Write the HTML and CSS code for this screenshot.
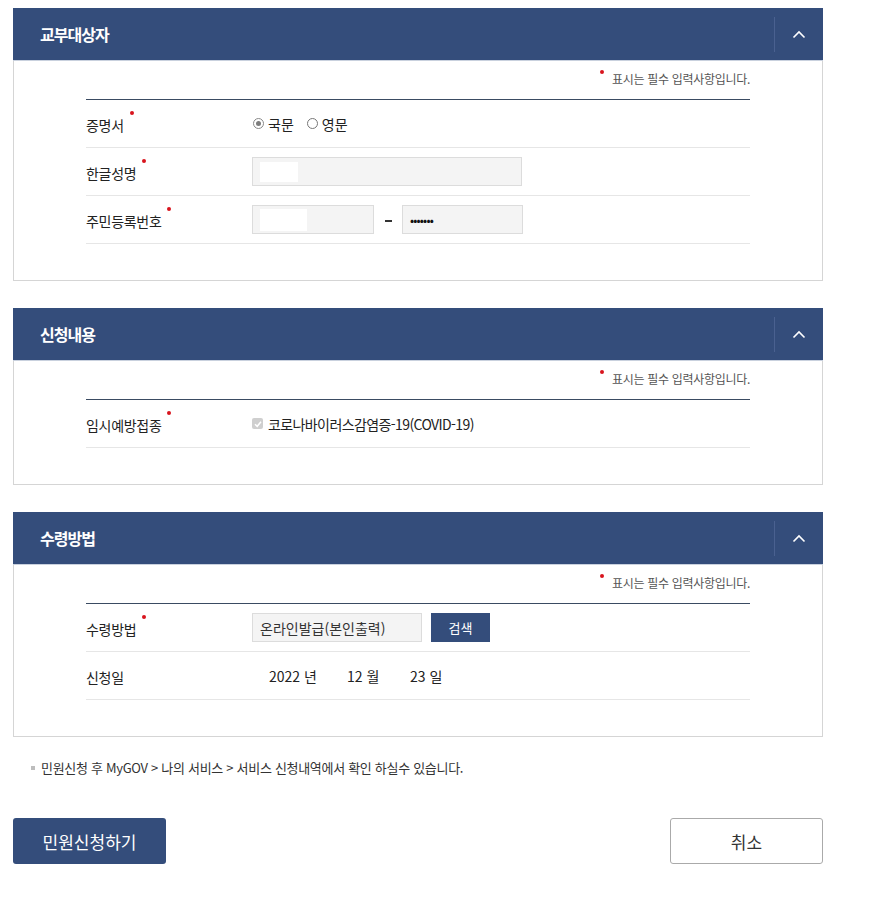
FILE: index.html
```html
<!DOCTYPE html>
<html lang="ko">
<head>
<meta charset="utf-8">
<title>민원신청</title>
<link rel="stylesheet" href="styles.css">
</head>
<body>
<div class="wrap">
  <section class="panel">
    <div class="panel-head">
      <h2 class="panel-title">교부대상자</h2>
      <button class="toggle" type="button" aria-label="접기"><svg width="14" height="9" viewBox="0 0 14 9"><path d="M1.5 7.5 L7 2 L12.5 7.5" fill="none" stroke="#fff" stroke-width="1.6"/></svg></button>
    </div>
    <div class="panel-body">
      <p class="req-note"><span class="dot"></span>표시는 필수 입력사항입니다.</p>
      <div class="form">
        <div class="row">
          <div class="label">증명서<span class="req"></span></div>
          <div class="field">
            <label class="radio"><span class="rb on"></span>국문</label>
            <label class="radio"><span class="rb"></span>영문</label>
          </div>
        </div>
        <div class="row">
          <div class="label">한글성명<span class="req"></span></div>
          <div class="field">
            <div class="input w270"><span class="mask m38"></span></div>
          </div>
        </div>
        <div class="row">
          <div class="label">주민등록번호<span class="req"></span></div>
          <div class="field">
            <div class="input w122"><span class="mask m47"></span></div>
            <span class="dash"><span class="bar"></span></span>
            <div class="input w121"><span class="pw">•••••••</span></div>
          </div>
        </div>
      </div>
    </div>
  </section>

  <section class="panel">
    <div class="panel-head">
      <h2 class="panel-title">신청내용</h2>
      <button class="toggle" type="button" aria-label="접기"><svg width="14" height="9" viewBox="0 0 14 9"><path d="M1.5 7.5 L7 2 L12.5 7.5" fill="none" stroke="#fff" stroke-width="1.6"/></svg></button>
    </div>
    <div class="panel-body">
      <p class="req-note"><span class="dot"></span>표시는 필수 입력사항입니다.</p>
      <div class="form">
        <div class="row">
          <div class="label">임시예방접종<span class="req"></span></div>
          <div class="field">
            <label class="check"><span class="cb"><svg width="10" height="10" viewBox="0 0 10 10"><path d="M2 5.2 L4.2 7.3 L8 2.8" fill="none" stroke="#fff" stroke-width="1.5"/></svg></span>코로나바이러스감염증-19(COVID-19)</label>
          </div>
        </div>
      </div>
    </div>
  </section>

  <section class="panel last">
    <div class="panel-head">
      <h2 class="panel-title">수령방법</h2>
      <button class="toggle" type="button" aria-label="접기"><svg width="14" height="9" viewBox="0 0 14 9"><path d="M1.5 7.5 L7 2 L12.5 7.5" fill="none" stroke="#fff" stroke-width="1.6"/></svg></button>
    </div>
    <div class="panel-body">
      <p class="req-note"><span class="dot"></span>표시는 필수 입력사항입니다.</p>
      <div class="form">
        <div class="row">
          <div class="label">수령방법<span class="req"></span></div>
          <div class="field">
            <div class="input w170 txt">온라인발급(본인출력)</div>
            <button class="search" type="button">검색</button>
          </div>
        </div>
        <div class="row">
          <div class="label">신청일</div>
          <div class="field date">
            <span class="d1">2022 년</span>
            <span class="d2">12 월</span>
            <span class="d3">23 일</span>
          </div>
        </div>
      </div>
    </div>
  </section>

  <p class="info"><span class="sq"></span>민원신청 후 MyGOV &gt; 나의 서비스 &gt; 서비스 신청내역에서 확인 하실수 있습니다.</p>

  <div class="actions">
    <button class="btn primary" type="button">민원신청하기</button>
    <button class="btn ghost" type="button">취소</button>
  </div>
</div>
</body>
</html>
```

FILE: styles.css
```css
* { box-sizing: border-box; }
html, body { margin: 0; padding: 0; background: #fff; }
body {
  font-family: "Noto Sans CJK KR", "Noto Sans", "Liberation Sans", sans-serif;
  color: #222;
}
.wrap {
  width: 810px;
  margin: 8px 0 0 13px;
  display: flex;
  flex-direction: column;
}
.panel { margin-bottom: 27px; }
.panel.last { margin-bottom: 0; }
.panel-head {
  height: 53px;
  background: #344d7b;
  display: flex;
  align-items: center;
  justify-content: space-between;
  padding-left: 27px;
  border-bottom: 1px solid #c9d1de;
}
.panel-title {
  margin: 0;
  color: #fff;
  font-size: 16px;
  font-weight: 700;
  letter-spacing: -1px;
  line-height: 20px;
}
.toggle {
  width: 49px;
  height: 35px;
  border: 0;
  border-left: 1px solid #4a6190;
  background: transparent;
  padding: 0;
  margin: 0;
  display: flex;
  align-items: center;
  justify-content: center;
  cursor: pointer;
}
.toggle svg { display: block; margin-top: 1px; }
.panel-body {
  border: 1px solid #d5d5d5;
  border-top: 0;
  padding: 7px 72px 36px;
}
.req-note {
  margin: 0 0 10px;
  text-align: right;
  font-size: 12px;
  color: #555;
  line-height: 21px;
  letter-spacing: -0.3px;
}
.req-note .dot {
  display: inline-block;
  width: 4px;
  height: 4px;
  border-radius: 50%;
  background: #d8141d;
  vertical-align: top;
  margin: 2px 8px 0 0;
}
.form { border-top: 1px solid #3a4b62; }
.row {
  display: flex;
  align-items: center;
  height: 48px;
  border-bottom: 1px solid #e6e6e6;
}
.label {
  width: 166px;
  font-size: 14px;
  line-height: 20px;
  color: #222;
  letter-spacing: -0.3px;
  padding-top: 2px;
}
.req {
  display: inline-block;
  width: 4px;
  height: 4px;
  border-radius: 50%;
  background: #d8141d;
  vertical-align: top;
  margin: -4px 0 0 6px;
}
.field {
  display: flex;
  align-items: center;
  font-size: 14px;
}
.radio {
  display: flex;
  align-items: center;
  margin-right: 12px;
  font-size: 14px;
  line-height: 20px;
  color: #222;
}
.rb {
  width: 11px;
  height: 11px;
  border-radius: 50%;
  border: 1px solid #777;
  background: #fff;
  margin: 0 4px 0 1px;
  position: relative;
  display: inline-block;
}
.rb.on { border-color: #888; }
.rb.on::after {
  content: "";
  position: absolute;
  left: 2px;
  top: 2px;
  width: 5px;
  height: 5px;
  border-radius: 50%;
  background: #7d7d7d;
}
.input {
  height: 29px;
  background: #f4f4f4;
  border: 1px solid #dcdcdc;
  display: flex;
  align-items: center;
  padding-left: 7px;
}
.w270 { width: 270px; }
.w122 { width: 122px; }
.w121 { width: 121px; }
.w170 { width: 170px; }
.mask { display: block; background: #fff; height: 20px; }
.m38 { width: 38px; }
.m47 { width: 47px; height: 22px; }
.dash {
  width: 28px;
  display: flex;
  justify-content: center;
  align-items: center;
}
.dash .bar {
  display: block;
  width: 7px;
  height: 2px;
  background: #333;
  margin-top: 2px;
}
.pw {
  font-size: 12px;
  letter-spacing: -0.8px;
  color: #111;
  line-height: 12px;
}
.txt {
  font-size: 14px;
  color: #333;
  line-height: 20px;
}
.search {
  margin-left: 9px;
  width: 59px;
  height: 29px;
  background: #344d7b;
  color: #fff;
  border: 0;
  font-family: inherit;
  font-size: 13px;
  padding: 0;
}
.check {
  display: flex;
  align-items: center;
  font-size: 14px;
  line-height: 20px;
  letter-spacing: -0.6px;
  color: #222;
}
.cb {
  width: 11px;
  height: 11px;
  border-radius: 2px;
  background: #cfcfcf;
  display: inline-flex;
  align-items: center;
  justify-content: center;
  margin-right: 5px;
}
.date { font-size: 14px; color: #222; line-height: 20px; }
.date .d1 { margin-left: 17px; width: 78px; }
.date .d2 { width: 63px; }
.info {
  margin: 22px 0 0 18px;
  font-size: 13px;
  line-height: 18px;
  color: #333;
  letter-spacing: -0.3px;
  display: flex;
  align-items: center;
}
.info .sq {
  width: 4px;
  height: 4px;
  background: #bdbdbd;
  margin-right: 6px;
}
.actions {
  display: flex;
  justify-content: space-between;
  margin-top: 41px;
}
.btn {
  width: 153px;
  height: 46px;
  border-radius: 3px;
  font-family: inherit;
  font-size: 17px;
  padding: 0;
}
.primary { background: #344d7b; color: #fff; border: 0; }
.ghost { background: #fff; color: #333; border: 1px solid #aaa; }
```
